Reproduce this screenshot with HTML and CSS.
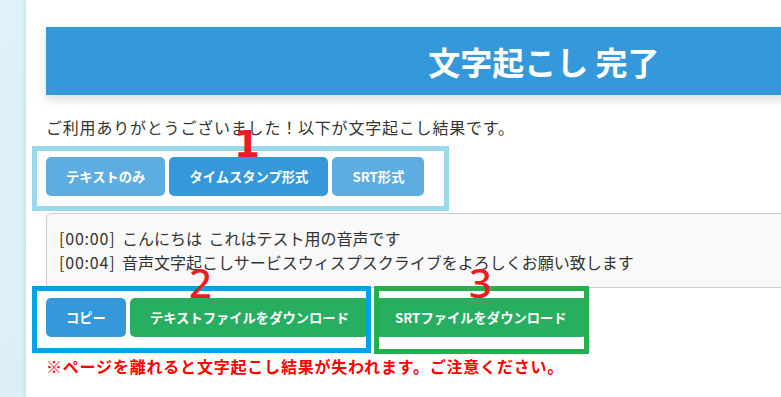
FILE: index.html
```html
<!DOCTYPE html>
<html lang="ja">
<head>
	<meta charset="UTF-8">
	<title>文字起こし 完了</title>
	<link rel="stylesheet" href="styles.css">
</head>
<body>
<div class="container">
	<h1 class="header">文字起こし 完了</h1>
	<p class="intro">ご利用ありがとうございました！以下が文字起こし結果です。</p>

	<div class="tabs">
		<button class="btn btn-light">テキストのみ</button>
		<button class="btn btn-blue">タイムスタンプ形式</button>
		<button class="btn btn-light">SRT形式</button>
	</div>

	<div class="result">
		<div><span class="time">[00:00]</span> こんにちは これはテスト用の音声です</div>
		<div><span class="time">[00:04]</span> 音声文字起こしサービスウィスプスクライブをよろしくお願い致します</div>
	</div>

	<div class="actions">
		<button class="btn btn-blue">コピー</button>
		<button class="btn btn-green">テキストファイルをダウンロード</button>
		<button class="btn btn-green btn-srt">SRTファイルをダウンロード</button>
	</div>

	<p class="warning">※ページを離れると文字起こし結果が失われます。ご注意ください。</p>

	<!-- 注釈 -->
	<div class="mark mark1"></div>
	<div class="mark mark2"></div>
	<div class="mark mark3"></div>
	<span class="num num1">1</span>
	<span class="num num2">2</span>
	<span class="num num3">3</span>
</div>
</body>
</html>
```

FILE: styles.css
```css
*{margin: 0;padding: 0;box-sizing: border-box;}
html,body{overflow: hidden;height: 100%;}
body{background: linear-gradient(135deg, #dff1f9, #d6ebf5);font-family: "Noto Sans CJK JP", sans-serif;color: #333;}

.container{position: relative;width: 1036px;min-height: 100%;margin-left: 26px;padding: 27px 20px 20px;background: #fff;box-shadow: 0 0 6px rgba(0,0,0,.12);}
.header{height: 68px;line-height: 68px;background: #3498db;color: #fff;font-size: 32px;font-weight: 700;text-align: center;box-shadow: 0 4px 10px rgba(0,0,0,.15);}
.intro{margin-top: 20px;font-size: 16px;line-height: 24px;letter-spacing: .8px;}

.tabs,.actions{display: flex;gap: 4px;}
.tabs{margin-top: 18px;}
.actions{margin-top: 10px;}
.btn{height: 39px;padding: 0 20px;border: none;border-radius: 5px;color: #fff;font-family: inherit;font-size: 13.3px;font-weight: 700;}
.btn-light{background: #5dade2;}
.btn-blue{background: #3498db;}
.btn-green{background: #27ae60;}
.btn-srt{margin-left: 2px;}

.result{margin-top: 17px;padding: 12px 12px 13px;border: 1px solid #ccc;border-radius: 5px;background: #f9f9f9;font-size: 16px;line-height: 24px;word-spacing: 3px;}
.result .time{letter-spacing: .8px;}
.warning{margin-top: 17px;color: #f00;font-size: 16px;font-weight: 700;line-height: 24px;letter-spacing: .8px;}

.mark{position: absolute;border: 5px solid;}
.mark1{left: 6px;top: 146px;width: 417px;height: 65px;border-color: #99d9ea;}
.mark2{left: 6px;top: 286px;width: 339px;height: 67px;border-color: #00a2e8;}
.mark3{left: 348px;top: 286px;width: 215px;height: 68px;border-color: #22b14c;}
.num{position: absolute;color: #ed1c24;line-height: 1;}
.num1{left: 208px;top: 126px;font-family: "DejaVu Sans", sans-serif;font-size: 37px;font-weight: 700;}
.num2,.num3{top: 263px;font-family: "Noto Sans", sans-serif;font-size: 40px;font-weight: 500;}
.num2{left: 163px;}
.num3{left: 443px;}
```
